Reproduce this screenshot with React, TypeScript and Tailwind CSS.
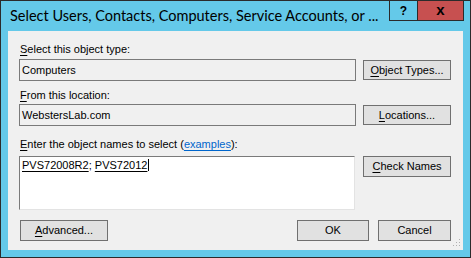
import React from "react";

function Btn({ label, u, className = "" }: { label: string; u: number; className?: string }) {
  return (
    <button
      type="button"
      className={`flex items-center justify-center border border-[#707070] bg-[#e1e1e1] text-[11px] leading-[13px] text-black ${className}`}
    >
      {u < 0 ? (
        label
      ) : (
        <>
          {label.slice(0, u)}
          <span className="underline underline-offset-[2px]">{label[u]}</span>
          {label.slice(u + 1)}
        </>
      )}
    </button>
  );
}

function Label({ text, className = "" }: { text: string; className?: string }) {
  return (
    <div className={`h-[13px] text-[11px] leading-[13px] text-black ${className}`}>
      <span className="underline underline-offset-[2px]">{text[0]}</span>
      {text.slice(1)}
    </div>
  );
}

export default function App() {
  return (
    <div
      className="flex h-[258px] w-[471px] flex-col border border-[#2b2b2b] bg-[#64c9e9]"
      style={{ fontFamily: '"Liberation Sans", Arial, sans-serif' }}
    >
      {/* title bar */}
      <div className="flex h-[30px] shrink-0 items-start">
        <div
          className="mt-[5px] ml-[9px] flex-1 whitespace-nowrap text-[14.5px] leading-[20px] text-black"
          style={{ fontFamily: 'Lato, "Noto Sans", sans-serif' }}
        >
          Select Users, Contacts, Computers, Service Accounts, or ...
        </div>
        <div className="-mt-px mr-[6px] flex h-[21px] shrink-0">
          <div className="flex w-[29px] items-center justify-center border border-[#2b2b2b] text-[12px] font-bold leading-none text-black">
            ?
          </div>
          <div className="-ml-px flex w-[47px] items-center justify-center border border-[#2b2b2b] bg-[#c75050] pb-[3px] text-[15px] font-bold leading-none text-black">
            x
          </div>
        </div>
      </div>

      {/* client area */}
      <div className="relative mx-[7px] h-[219px] bg-[#f0f0f0] pt-[12px] pr-[12px] pl-[11px]">
        <Label text="Select this object type:" className="ml-px" />
        <div className="mt-[3px] flex items-center gap-[7px]">
          <div className="flex h-[22px] w-[337px] items-center border border-[#7a7a7a] px-[2px] text-[11px] text-black">
            Computers
          </div>
          <Btn label="Object Types..." u={0} className="h-[20px] w-[88px]" />
        </div>

        <Label text="From this location:" className="mt-[8px] ml-px" />
        <div className="mt-[2px] flex items-center gap-[7px]">
          <div className="flex h-[22px] w-[337px] items-center border border-[#7a7a7a] px-[2px] text-[11px] text-black">
            WebstersLab.com
          </div>
          <Btn label="Locations..." u={0} className="h-[20px] w-[88px]" />
        </div>

        <div className="mt-[12px] ml-px h-[13px] text-[11px] leading-[13px] text-black">
          <span className="underline underline-offset-[2px]">E</span>nter the object names to select (
          <span className="text-[#0066cc] underline underline-offset-[2px]">examples</span>):
        </div>
        <div className="mt-[5px] flex items-start gap-[8px]">
          <div className="h-[54px] w-[336px] border border-t-[#7a7a7a] border-r-[#e3e3e3] border-b-[#e3e3e3] border-l-[#7a7a7a] bg-white px-[2px] pt-[2px] text-[11px] leading-[13px] text-black">
            <span className="underline underline-offset-[2px]">PVS72008R2</span>;{" "}
            <span className="underline underline-offset-[2px]">PVS72012</span>
            <span className="ml-px inline-block h-[12px] w-px bg-black align-[-2px]" />
          </div>
          <Btn label="Check Names" u={0} className="h-[21px] w-[88px]" />
        </div>

        <div className="mt-[10px] flex items-center">
          <Btn label="Advanced..." u={0} className="ml-px h-[21px] w-[88px]" />
          <div className="flex-1" />
          <Btn label="OK" u={-1} className="h-[21px] w-[72px]" />
          <Btn label="Cancel" u={-1} className="ml-[9px] h-[21px] w-[73px]" />
        </div>

        {/* size grip */}
        <svg className="absolute right-[2px] bottom-[3px]" width="8" height="8" viewBox="0 0 8 8">
          <rect x="6" y="0" width="1" height="1" fill="#b0b0b0" />
          <rect x="3" y="3" width="1" height="1" fill="#b0b0b0" />
          <rect x="6" y="3" width="1" height="1" fill="#b0b0b0" />
          <rect x="0" y="6" width="1" height="1" fill="#b0b0b0" />
          <rect x="3" y="6" width="1" height="1" fill="#b0b0b0" />
          <rect x="6" y="6" width="1" height="1" fill="#b0b0b0" />
        </svg>
      </div>
    </div>
  );
}
